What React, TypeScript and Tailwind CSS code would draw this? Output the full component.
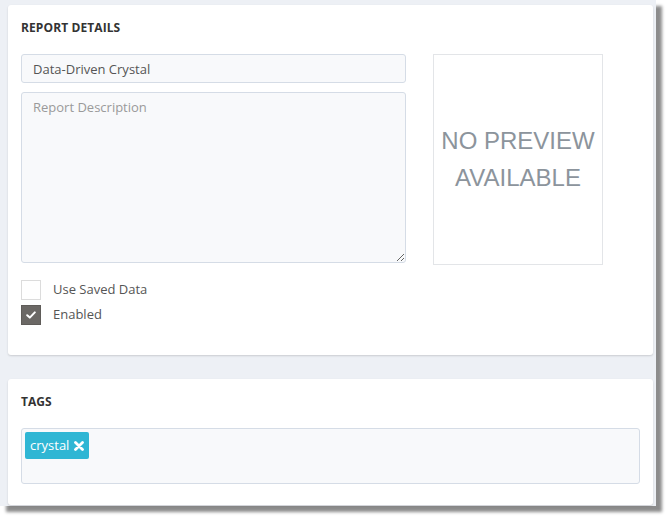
import React from "react";

const font = { fontFamily: '"Open Sans", "Liberation Sans", sans-serif' };

function Checkbox({ checked, label }: { checked: boolean; label: string }) {
  return (
    <div className="flex items-center h-[20px]">
      {checked ? (
        <div className="w-[20px] h-[20px] bg-[#6b6865] border border-[#5f5c59] flex items-center justify-center">
          <svg width="10" height="8" viewBox="0 0 10 8" fill="none">
            <path d="M1.2 4.2 L3.8 6.6 L8.8 1.4" stroke="#fff" strokeWidth="2" strokeLinecap="round" strokeLinejoin="round" />
          </svg>
        </div>
      ) : (
        <div className="w-[20px] h-[20px] bg-white border border-[#dcdcdc]" />
      )}
      <span className="ml-[12px] -mt-[2px] text-[13px] leading-[18px] text-[#555]">{label}</span>
    </div>
  );
}

export default function App() {
  return (
    <div className="w-[670px] h-[519px] bg-white" style={font}>
      <div className="w-[656px] h-[506px] bg-[#edf0f5] pt-[5px] pl-[8px] shadow-[6px_6px_3px_rgba(0,0,0,0.45)]">
        {/* report details */}
        <div className="w-[645px] h-[350px] bg-white rounded-[3px] shadow-[0_1px_2px_rgba(0,0,0,0.15)] px-[13px]">
          <h2 className="pt-[15px] text-[12px] leading-[16px] font-bold text-[#333] tracking-[0.1px]">REPORT DETAILS</h2>
          <div className="flex mt-[18px]">
            <div className="w-[385px]">
              <input
                defaultValue="Data-Driven Crystal"
                className="w-full h-[29px] px-[11px] text-[13px] text-[#555] bg-[#f8f9fb] border border-[#d5dce6] rounded-[3px] outline-none"
                style={font}
              />
              <textarea
                placeholder="Report Description"
                className="block mt-[9px] w-full h-[171px] px-[11px] py-[5px] text-[13px] text-[#555] placeholder:text-[#9a9a9a] bg-[#f8f9fb] border border-[#d5dce6] rounded-[3px] outline-none"
                style={font}
              />
            </div>
            <div
              className="ml-[27px] w-[170px] h-[211px] border border-[#e3e5e8] bg-white flex flex-col items-center justify-center text-[24px] leading-[37px] text-[#8c949c] pb-[2px]"
              style={{ fontFamily: '"Liberation Sans", Arial, sans-serif' }}
            >
              <span>NO PREVIEW</span>
              <span>AVAILABLE</span>
            </div>
          </div>
          <div className="mt-[15px] flex flex-col gap-[5px]">
            <Checkbox checked={false} label="Use Saved Data" />
            <Checkbox checked={true} label="Enabled" />
          </div>
        </div>

        {/* tags */}
        <div className="mt-[24px] w-[645px] h-[126px] bg-white rounded-[3px] shadow-[0_1px_2px_rgba(0,0,0,0.15)] px-[13px]">
          <h2 className="pt-[15px] text-[12px] leading-[16px] font-bold text-[#333]">TAGS</h2>
          <div className="mt-[18px] w-[619px] h-[56px] bg-[#f8f9fb] border border-[#d5dce6] rounded-[3px] p-[3px]">
            <span className="inline-flex items-center h-[27px] px-[5px] bg-[#2fb6d4] rounded-[2px] text-white text-[13px]">
              crystal
              <svg className="ml-[5px]" width="10" height="10" viewBox="0 0 10 10">
                <path d="M1.5 1.5 L8.5 8.5 M8.5 1.5 L1.5 8.5" stroke="#fff" strokeWidth="2.8" strokeLinecap="round" />
              </svg>
            </span>
          </div>
        </div>
      </div>
    </div>
  );
}
